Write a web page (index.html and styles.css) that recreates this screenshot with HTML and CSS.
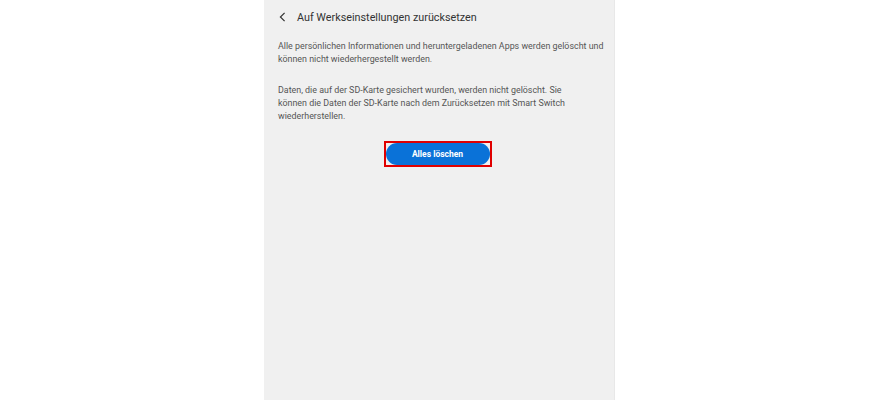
FILE: index.html
```html
<!DOCTYPE html>
<html>
<head>
  <title>Auf Werkseinstellungen zurücksetzen</title>
  <link rel="stylesheet" href="styles.css">
</head>
<body>
  <div class="screen">
    <div class="header">
      <svg class="back" width="7" height="10" viewBox="0 0 7 10">
        <path d="M5.6 0.8 L1.4 5 L5.6 9.2" fill="none" stroke="#333" stroke-width="1.2"/>
      </svg>
      <span class="title">Auf Werkseinstellungen zurücksetzen</span>
    </div>

    <div class="content">
      <p>Alle persönlichen Informationen und heruntergeladenen Apps werden gelöscht und können nicht wiederhergestellt werden.</p>
      <p class="narrow">Daten, die auf der SD-Karte gesichert wurden, werden nicht gelöscht. Sie können die Daten der SD-Karte nach dem Zurücksetzen mit Smart Switch wiederherstellen.</p>
    </div>

    <div class="actions">
      <div class="highlight">
        <button>Alles löschen</button>
      </div>
    </div>
  </div>
</body>
</html>
```

FILE: styles.css
```css
/* Seite */
body {
  margin: 0;
  padding: 0;
  background-color: #fff;
  font-family: Roboto, "Liberation Sans", sans-serif;
}

/* Bildschirm des Geräts */
.screen {
  width: 351px;
  height: 400px;
  margin-left: 264px;
  background-color: #f0f0f0;
  box-sizing: border-box;
  border-right: 1px solid #e8e8e8;
}

/* Kopfzeile */
.header {
  display: flex;
  align-items: center;
  height: 34px;
  padding-left: 14px;
}

.back {
  margin-left: 1px;
  margin-right: 11px;
}

.title {
  font-size: 10.8px;
  color: #333;
}

/* Texte */
.content {
  padding: 6px 8px 0 14px;
}

.content p {
  margin: 0 0 18px 0;
  font-size: 8.9px;
  line-height: 13px;
  color: #555;
}

.content p.narrow {
  padding-right: 36px;
}

/* Schaltfläche */
.actions {
  display: flex;
  justify-content: center;
  padding-right: 3px;
}

.highlight {
  border: 2px solid #e00000;
  line-height: 0;
}

button {
  width: 104px;
  height: 22px;
  background-color: #0a72d8;
  color: white;
  font-family: Roboto, "Liberation Sans", sans-serif;
  font-size: 8.5px;
  font-weight: bold;
  border: none;
  border-radius: 11px;
  padding: 0;
}
```
